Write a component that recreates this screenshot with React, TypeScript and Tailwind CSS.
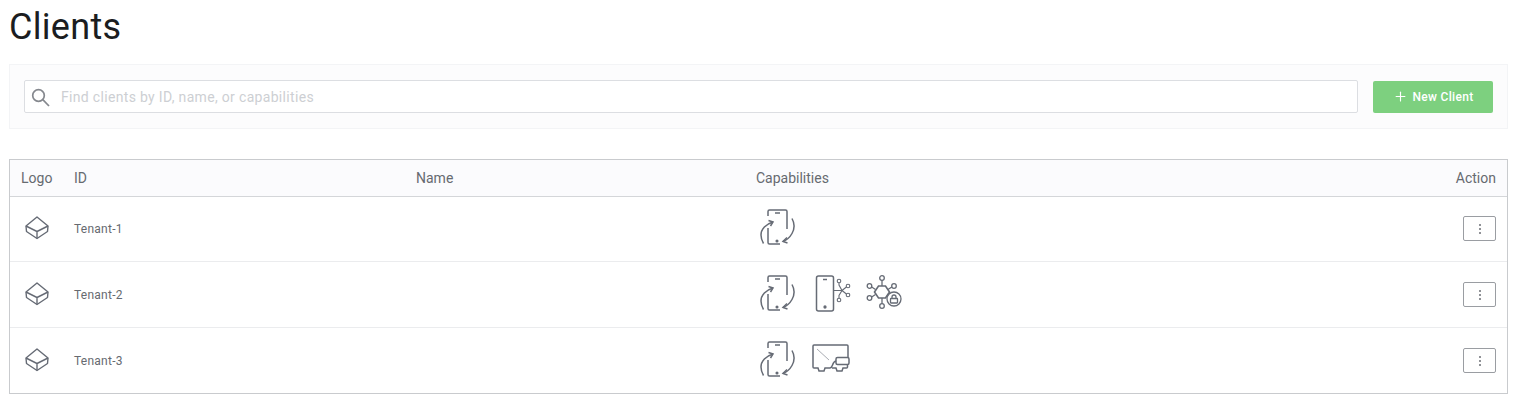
import { Plus } from 'lucide-react'

const SearchGlyph = () => (
  <svg width="21" height="20" viewBox="0 0 21 20" fill="none" stroke="#85888e" strokeWidth="1.700" className="shrink-0">
    <circle cx="9.500" cy="8.500" r="5.800" />
    <path d="M13.800 12.600L20 19" />
  </svg>
)

const PhoneSync = () => (
  <svg width="38" height="38" viewBox="0 0 38 38" fill="none" stroke="#666b75" strokeWidth="1.5" className="shrink-0">
    <path d="M11 8V3.500A1.500 1.500 0 0 1 12.500 2H28.500A1.500 1.500 0 0 1 30 3.500V21" />
    <path d="M11 20V34.500A1.500 1.500 0 0 0 12.500 36H23" />
    <path d="M18 5H23" />
    <circle cx="20" cy="33" r="0.800" fill="#666b75" />
    <path d="M16 14C9 16 4 21 4 27C4 30 5 33 6.500 35.500" />
    <path d="M11.500 12.500L16 14L13.500 18" />
    <path d="M35 10.500C37.500 15 37.500 21 35 25.500C33 29 30 32 26 33.500" />
    <path d="M30 29.500L26 33.500L30.500 35" />
  </svg>
)

const PhoneNodes = () => (
  <svg width="40" height="38" viewBox="0 0 40 38" fill="none" stroke="#666b75" strokeWidth="1.5" className="shrink-0">
    <rect x="4.500" y="2" width="17" height="35" rx="2" />
    <path d="M11 5.500H15" />
    <circle cx="13" cy="33" r="0.900" fill="#666b75" />
    <g strokeWidth="1.100">
      <circle cx="27" cy="7" r="1.800" />
      <circle cx="27" cy="26" r="1.800" />
      <circle cx="36" cy="12" r="1.800" />
      <circle cx="36" cy="21" r="1.800" />
      <path d="M27 8.800V11L30 16.500H21.500M30 16.500L34.400 13M30 16.500L34.400 20M27 24.200V21.500L30 16.500" />
    </g>
  </svg>
)

const HexLock = () => (
  <svg width="38" height="38" viewBox="0 0 38 38" fill="none" stroke="#666b75" strokeWidth="1.300" className="ml-[-4px] shrink-0">
    <path d="M13.500 12H20.500L24.500 18L20.500 24H13.500L9.500 18Z" strokeWidth="1.600" />
    <circle cx="17" cy="4" r="2.300" />
    <circle cx="17" cy="32" r="2.300" />
    <circle cx="4.500" cy="12" r="2.300" />
    <circle cx="4.500" cy="24" r="2.300" />
    <circle cx="29" cy="12" r="2.300" />
    <path d="M17 6.300V12M17 24V29.700M6.700 13L10.500 15.500M6.700 23L10.500 20.500M26.800 13L23 15.500" />
    <circle cx="29" cy="25" r="7" fill="#fff" />
    <rect x="25.500" y="24.500" width="7" height="4.500" rx="0.500" />
    <path d="M27 24.500V23A2 2 0 0 1 31 23V24.500" />
  </svg>
)

const Terminal = () => (
  <svg width="38" height="38" viewBox="0 0 38 38" fill="none" stroke="#666b75" strokeWidth="1.500" className="shrink-0">
    <path d="M36 17.500V6A1 1 0 0 0 35 5H2A1 1 0 0 0 1 6V27A1 1 0 0 0 2 28H6L7 31H12L13 28H18" />
    <path d="M5 9L17 20" stroke="#a9acb3" strokeWidth="1" />
    <path d="M18 28C21.500 27.500 19.500 22 24 21" />
    <rect x="24" y="17.500" width="13" height="7" rx="1.500" />
    <path d="M35.500 24.500V27A1 1 0 0 1 34.500 28H31L30 31H25L24 28H20" />
  </svg>
)

const Box = () => (
  <svg width="26" height="24" viewBox="0 0 26 24" fill="none" stroke="#666b75" strokeWidth="1.400" strokeLinejoin="round">
    <path d="M13 1L24 10L23.500 15.500L13 22.500L2.500 15.500L2 10Z" />
    <path d="M2 10L13 15.500L24 10M13 15.500V22.500" />
  </svg>
)

const clients = [
  { id: 'Tenant-1', caps: [PhoneSync], rowClass: 'h-[65px] border-b border-[#ebecee] pb-[1px]' },
  { id: 'Tenant-2', caps: [PhoneSync, PhoneNodes, HexLock], rowClass: 'h-[66px] border-b border-[#ebecee]' },
  { id: 'Tenant-3', caps: [PhoneSync, Terminal], rowClass: 'h-[65px]' },
]

export default function App() {
  return (
    <div className="h-[405px] w-[1526px] overflow-hidden bg-white font-['Roboto',sans-serif]">
      <div className="pl-[9px] pr-[18px]">
        <h1 className="h-[64px] pt-[5px] text-[36px] leading-[44px] font-normal tracking-[0.3px] text-[#1b1d21]">Clients</h1>

        <div className="flex h-[65px] items-center gap-[15px] border border-[#f3f4f6] bg-[#fcfcfd] px-[14px]">
          <div className="flex h-[33px] flex-1 items-center rounded-[2px] border border-[#dcdee2] bg-white pl-[4px]">
            <SearchGlyph />
            <span className="mt-[2px] ml-[11px] text-[14px] tracking-[0.32px] text-[#cdcfd3]">Find clients by ID, name, or capabilities</span>
          </div>
          <button className="flex h-[32px] w-[120px] items-center justify-center gap-[5px] rounded-[2px] bg-[#7dd07f] text-[12px] font-medium tracking-[0.3px] text-white">
            <Plus size={15} strokeWidth={1.800} />
            New Client
          </button>
        </div>

        <div className="mt-[30px] border border-[#c9cbce]">
          <div className="flex h-[37px] items-center border-b border-[#d4d6d9] bg-[#fbfbfd] text-[14px] text-[#666a70]">
            <div className="w-[64px] pl-[11px]">Logo</div>
            <div className="w-[342px]">ID</div>
            <div className="w-[340px]">Name</div>
            <div className="flex-1">Capabilities</div>
            <div className="pr-[11px]">Action</div>
          </div>
          {clients.map((client) => (
            <div key={client.id} className={`flex items-center text-[12px] tracking-[0.25px] text-[#666a70] ${client.rowClass}`}>
              <div className="w-[64px] pb-[2px] pl-[14px]">
                <Box />
              </div>
              <div className="w-[682px]">{client.id}</div>
              <div className="flex flex-1 items-center gap-[17px] pb-[4px] pl-[1px]">
                {client.caps.map((Icon, i) => (
                  <Icon key={i} />
                ))}
              </div>
              <div className="pr-[11px]">
                <button className="flex h-[25px] w-[33px] items-center justify-center rounded-[2px] border border-[#9a9da2]">
                  <span className="flex flex-col gap-[2px]">
                    <span className="h-[2px] w-[2px] rounded-full bg-[#6b6e75]" />
                    <span className="h-[2px] w-[2px] rounded-full bg-[#6b6e75]" />
                    <span className="h-[2px] w-[2px] rounded-full bg-[#6b6e75]" />
                  </span>
                </button>
              </div>
            </div>
          ))}
        </div>
      </div>
    </div>
  )
}
